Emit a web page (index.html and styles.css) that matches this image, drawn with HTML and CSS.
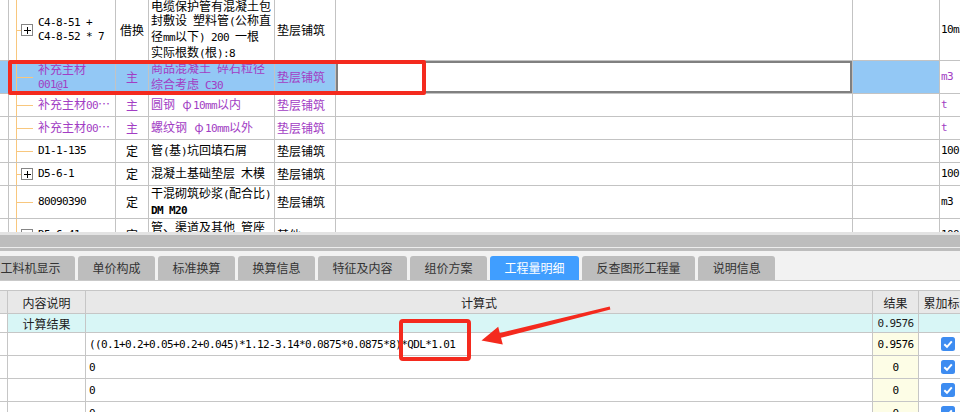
FILE: index.html
```html
<!DOCTYPE html>
<html lang="zh-CN">
<head>
<meta charset="utf-8">
<title>工程量明细</title>
<link rel="stylesheet" href="styles.css">
</head>
<body>
<div class="top">
  <div class="row h4">
    <div class="c"></div>
    <div class="c tree"><span class="br s"></span><svg class="plus" width="12" height="12" viewBox="0 0 12 12"><rect x="0.5" y="0.5" width="11" height="11" fill="#fff" stroke="#858585"/><path d="M3 6.5H10M6.5 3V10" stroke="#000"/></svg><div class="a">C4-8-51 +<br>C4-8-52 * 7</div></div>
    <div class="c typ">借换</div>
    <div class="c nm"><div>电缆保护管有混凝土包<br>封敷设<span class="a"> </span>塑料管<span class="a">(</span>公称直<br>径<span class="a">mm</span>以下<span class="a">) 200 </span>一根<br>实际根数<span class="a">(</span>根<span class="a">):8</span></div></div>
    <div class="c nm">垫层铺筑</div>
    <div class="c"></div>
    <div class="c"></div>
    <div class="c unit a">10m3</div>
  </div>
  <div class="row h2 sel pu">
    <div class="c"></div>
    <div class="c tree"><span class="br"></span><div>补充主材<br><span class="a">001@1</span></div></div>
    <div class="c typ">主</div>
    <div class="c nm"><div>商品混凝土<span class="a"> </span>碎石粒径<br>综合考虑<span class="a"> C30</span></div></div>
    <div class="c nm">垫层铺筑</div>
    <div class="c edit"></div>
    <div class="c"></div>
    <div class="c unit u a">m3</div>
  </div>
  <div class="row pu">
    <div class="c"></div>
    <div class="c tree"><span class="br"></span><div>补充主材<span class="a">00</span>…</div></div>
    <div class="c typ">主</div>
    <div class="c nm"><div>圆钢<span class="a"> </span><span class="w">φ</span><span class="a">10mm</span>以内</div></div>
    <div class="c nm">垫层铺筑</div>
    <div class="c"></div>
    <div class="c"></div>
    <div class="c unit a">t</div>
  </div>
  <div class="row pu">
    <div class="c"></div>
    <div class="c tree"><span class="br"></span><div>补充主材<span class="a">00</span>…</div></div>
    <div class="c typ">主</div>
    <div class="c nm"><div>螺纹钢<span class="a"> </span><span class="w">φ</span><span class="a">10mm</span>以外</div></div>
    <div class="c nm">垫层铺筑</div>
    <div class="c"></div>
    <div class="c"></div>
    <div class="c unit a">t</div>
  </div>
  <div class="row">
    <div class="c"></div>
    <div class="c tree"><span class="br"></span><div class="a">D1-1-135</div></div>
    <div class="c typ">定</div>
    <div class="c nm"><div>管<span class="a">(</span>基<span class="a">)</span>坑回填石屑</div></div>
    <div class="c nm">垫层铺筑</div>
    <div class="c"></div>
    <div class="c"></div>
    <div class="c unit a">100</div>
  </div>
  <div class="row">
    <div class="c"></div>
    <div class="c tree"><span class="br s"></span><svg class="plus" width="12" height="12" viewBox="0 0 12 12"><rect x="0.5" y="0.5" width="11" height="11" fill="#fff" stroke="#858585"/><path d="M3 6.5H10M6.5 3V10" stroke="#000"/></svg><div class="a">D5-6-1</div></div>
    <div class="c typ">定</div>
    <div class="c nm"><div>混凝土基础垫层<span class="a"> </span>木模</div></div>
    <div class="c nm">垫层铺筑</div>
    <div class="c"></div>
    <div class="c"></div>
    <div class="c unit a">100</div>
  </div>
  <div class="row h2">
    <div class="c"></div>
    <div class="c tree"><span class="br"></span><div class="a">80090390</div></div>
    <div class="c typ">定</div>
    <div class="c nm"><div>干混砌筑砂浆<span class="a">(</span>配合比<span class="a">)</span><br><span class="a b">DM M20</span></div></div>
    <div class="c nm">垫层铺筑</div>
    <div class="c"></div>
    <div class="c"></div>
    <div class="c unit a">m3</div>
  </div>
  <div class="row h2">
    <div class="c"></div>
    <div class="c tree"><span class="br s"></span><svg class="plus" width="12" height="12" viewBox="0 0 12 12"><rect x="0.5" y="0.5" width="11" height="11" fill="#fff" stroke="#858585"/><path d="M3 6.5H10M6.5 3V10" stroke="#000"/></svg><div class="a">D5-6-41</div></div>
    <div class="c typ">定</div>
    <div class="c nm"><div>管、渠道及其他<span class="a"> </span>管座<br>混凝土</div></div>
    <div class="c nm">其他</div>
    <div class="c"></div>
    <div class="c"></div>
    <div class="c unit a">100</div>
  </div>
</div>
<div class="split"></div>
<div class="tabs">
  <div class="tab first">工料机显示</div>
  <div class="tab">单价构成</div>
  <div class="tab">标准换算</div>
  <div class="tab">换算信息</div>
  <div class="tab">特征及内容</div>
  <div class="tab">组价方案</div>
  <div class="tab on">工程量明细</div>
  <div class="tab">反查图形工程量</div>
  <div class="tab">说明信息</div>
</div>
<div class="gap"></div>
<div class="bottom">
  <div class="brow head">
    <div class="bc"></div>
    <div class="bc ctr">内容说明</div>
    <div class="bc ctr">计算式</div>
    <div class="bc ctr">结果</div>
    <div class="bc ctr">累加标识</div>
  </div>
  <div class="brow sum">
    <div class="bc blank"></div>
    <div class="bc ctr">计算结果</div>
    <div class="bc"></div>
    <div class="bc ctr a">0.9576</div>
    <div class="bc"></div>
  </div>
  <div class="brow">
    <div class="bc"></div>
    <div class="bc"></div>
    <div class="bc fx">((0.1+0.2+0.05+0.2+0.045)*1.12-3.14*0.0875*0.0875*8)*QDL*1.01</div>
    <div class="bc ctr a res">0.9576</div>
    <div class="bc ctr"><svg width="14" height="14" viewBox="0 0 14 14"><rect width="14" height="14" rx="2.5" fill="#3d8cf1"/><path d="M3.3 7.2L6 9.8L10.8 4.4" fill="none" stroke="#fff" stroke-width="2"/></svg></div>
  </div>
  <div class="brow">
    <div class="bc"></div>
    <div class="bc"></div>
    <div class="bc fx">0</div>
    <div class="bc ctr a res">0</div>
    <div class="bc ctr"><svg width="14" height="14" viewBox="0 0 14 14"><rect width="14" height="14" rx="2.5" fill="#3d8cf1"/><path d="M3.3 7.2L6 9.8L10.8 4.4" fill="none" stroke="#fff" stroke-width="2"/></svg></div>
  </div>
  <div class="brow">
    <div class="bc"></div>
    <div class="bc"></div>
    <div class="bc fx">0</div>
    <div class="bc ctr a res">0</div>
    <div class="bc ctr"><svg width="14" height="14" viewBox="0 0 14 14"><rect width="14" height="14" rx="2.5" fill="#3d8cf1"/><path d="M3.3 7.2L6 9.8L10.8 4.4" fill="none" stroke="#fff" stroke-width="2"/></svg></div>
  </div>
  <div class="brow">
    <div class="bc"></div>
    <div class="bc"></div>
    <div class="bc fx">0</div>
    <div class="bc ctr a res">0</div>
    <div class="bc ctr"><svg width="14" height="14" viewBox="0 0 14 14"><rect width="14" height="14" rx="2.5" fill="#3d8cf1"/><path d="M3.3 7.2L6 9.8L10.8 4.4" fill="none" stroke="#fff" stroke-width="2"/></svg></div>
  </div>
</div>
<div class="mark mark-row"></div>
<div class="mark mark-qdl"></div>
<svg class="arrow" width="960" height="412" viewBox="0 0 960 412"><polygon points="481.5,340.5 498.2,326.7 499.8,333 609.7,306.6 610.4,309.4 501,337.8 502.8,344.4" fill="#f42a1e"/></svg>
</body>
</html>
```
FILE: styles.css
```css
* { box-sizing: border-box; margin: 0; padding: 0; }
html, body { width: 960px; height: 412px; overflow: hidden; background: #fff; }
body {
  position: relative;
  font-family: "Noto Sans CJK SC", sans-serif;
  font-size: 12px;
  color: #000;
}

/* half-width ASCII runs, 6px per character like the original bitmap font */
.a {
  font-family: "DejaVu Sans Mono", "Liberation Mono", monospace;
  font-size: 11px;
  letter-spacing: -0.62px;
}
.b { font-weight: bold; letter-spacing: -0.62px; }
.w { display: inline-block; width: 12px; text-align: center; }

/* upper grid */
.top {
  height: 232px;
  overflow: hidden;
  font-size: 12px;
  line-height: 14px;
}
.row {
  display: grid;
  grid-template-columns: 9px 107px 33px 126px 61px 517px 87px 60px;
  height: 23px;
  border-bottom: 1px solid #c3c3c3;
}
.row.h2 { height: 33px; }
.row.h4 { height: 61px; }
.c {
  display: flex;
  align-items: center;
  overflow: hidden;
  white-space: nowrap;
  border-right: 1px solid #c3c3c3;
}
.tree {
  padding-left: 8px;
  background: linear-gradient(#f8c77e, #f8c77e) no-repeat 7px 0 / 1px 100%;
}
.br { flex: none; width: 16px; height: 1px; margin-right: 5px; background: #f8c77e; }
.br.s { width: 4px; margin-right: 0; }
.plus { flex: none; margin-right: 5px; }
.typ { justify-content: center; }
.nm { padding-left: 2px; }
.unit { padding-left: 1px; }
.pu { color: #a23dc4; }
.sel .c { background-color: #93c8f5; }
.sel .edit { background: #fff; box-shadow: inset 0 0 0 2px #808080; }
.sel .u { background: #fff; }

/* splitter + tabs */
.split {
  height: 19px;
  background: linear-gradient(#e3e3e3 0 3px, #bdbdbd 3px 15px, #ededed 15px 16px, #bdbdbd 16px);
}
.tabs {
  display: flex;
  align-items: flex-end;
  gap: 3px;
  height: 30px;
  background: #f2f2f2;
  border-bottom: 1px solid #c9c9c9;
}
.tab {
  flex: none;
  height: 24px;
  line-height: 24px;
  padding: 0 14.5px;
  background: #bdbdbd;
  border-radius: 3px 3px 0 0;
  color: #333;
  font-size: 12px;
  white-space: nowrap;
}
.tab.first { margin-left: -14px; }
.tab.on { background: #409eff; color: #fff; }
.gap { height: 9px; }

/* lower grid */
.bottom { border-top: 1px solid #c6c6c6; }
.brow {
  display: grid;
  grid-template-columns: 8px 78px 787px 46px 58px;
  height: 23px;
  border-bottom: 1px solid #c6c6c6;
}
.bc {
  display: flex;
  align-items: center;
  overflow: hidden;
  white-space: nowrap;
  border-right: 1px solid #c6c6c6;
}
.ctr { justify-content: center; }
.head .bc { background: #e8e8e8; color: #222; }
.sum { height: 19px; }
.sum .bc { background: #d8f6f6; color: #222; }
.sum .blank { background: #fff; }
.fx {
  padding-left: 3px;
  font-family: "DejaVu Sans Mono", "Liberation Mono", monospace;
  font-size: 11px;
  letter-spacing: -0.62px;
}
.res { background: #fdfde6; }

/* annotations */
.mark {
  position: absolute;
  border: 4px solid #f42a1e;
  border-radius: 2px;
}
.mark-row { left: 8px; top: 60px; width: 418px; height: 35px; }
.mark-qdl { left: 399px; top: 319px; width: 72px; height: 42px; border-radius: 4px; }
.arrow { position: absolute; left: 0; top: 0; pointer-events: none; }
```
